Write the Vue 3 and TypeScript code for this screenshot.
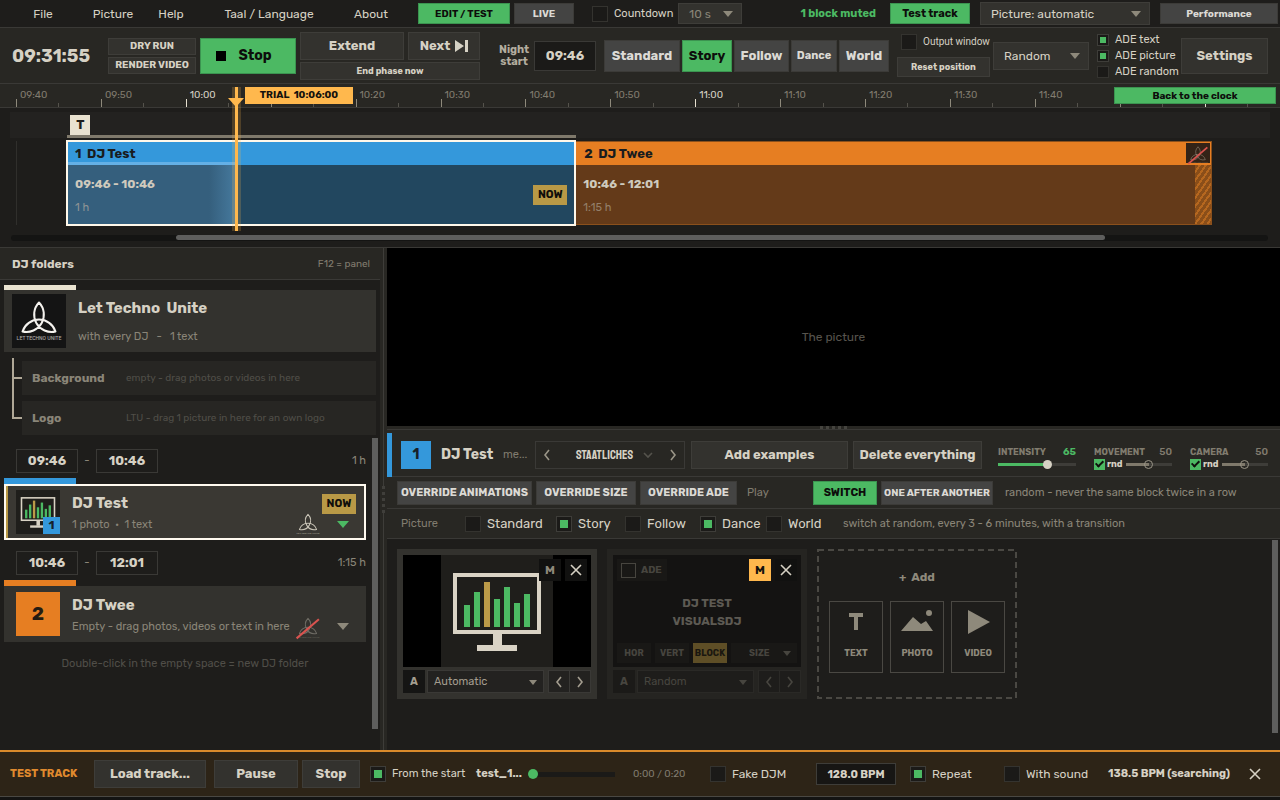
<script setup lang="ts">
import { defineComponent, h, ref } from 'vue'

const SPAN = 1280
const PX_PER_MIN = 8.49
const START_MIN = 580

const x = (min: number) => ((16 + (min - START_MIN) * PX_PER_MIN) / SPAN) * 100
const at = (min: number) => ({ left: `${x(min)}%` })
const range = (a: number, b: number) => ({ left: `${x(a)}%`, width: `${x(b) - x(a)}%` })

interface Tick { min: number; label: string; major: boolean; hour: boolean }
const ticks: Tick[] = []
for (let m = START_MIN; m <= 725; m += 5) {
  const major = m % 10 === 0
  const show = major && m <= 700 && m !== 610
  const hh = String(Math.floor(m / 60)).padStart(2, '0')
  ticks.push({ min: m, major, hour: m % 60 === 0, label: show ? `${hh}:${String(m % 60).padStart(2, '0')}` : '' })
}

const menus = [
  { t: 'File', c: 'm-file' },
  { t: 'Picture', c: 'm-picture' },
  { t: 'Help', c: 'm-help' },
  { t: 'Taal / Language', c: 'm-lang' },
  { t: 'About', c: 'm-about' },
]
const modes = ['Standard', 'Story', 'Follow', 'Dance', 'World']
const ade = ref([
  { t: 'ADE text', on: true },
  { t: 'ADE picture', on: true },
  { t: 'ADE random', on: false },
])
const pictures = ref([
  { t: 'Standard', on: false },
  { t: 'Story', on: true },
  { t: 'Follow', on: false },
  { t: 'Dance', on: true },
  { t: 'World', on: false },
])
const levels = ref([
  { t: 'Intensity', v: 65, rnd: false },
  { t: 'Movement', v: 50, rnd: true },
  { t: 'Camera', v: 50, rnd: true },
])
const nightStart = ref('09:46')
const bpm = ref('128.0 BPM')
const slots = ref({ a1: '09:46', a2: '10:46', b1: '10:46', b2: '12:01' })

const Knot = defineComponent({
  props: { off: Boolean },
  setup: (p) => () =>
    h('svg', { viewBox: '0 0 54 54', 'aria-hidden': 'true' }, [
      h('path', {
        d: 'M27 8.5A17.4 17.4 0 0 0 43.5 37.5A17.4 17.4 0 0 0 10.5 37.5A17.4 17.4 0 0 0 27 8.5Z',
        fill: 'none', stroke: 'currentColor', 'stroke-width': 2, 'stroke-linejoin': 'round', opacity: p.off ? 0.4 : 1,
      }),
      h('text', {
        x: 27, y: 46, 'text-anchor': 'middle', 'font-size': 5, fill: 'currentColor', opacity: p.off ? 0.3 : 0.7,
      }, 'LET TECHNO UNITE'),
      p.off ? h('path', { d: 'M5 47L48 10', stroke: '#d9534f', 'stroke-width': 4 }) : null,
    ]),
})

const bars: [number, number][] = [[23, 50], [33, 37], [43, 27], [53, 44], [63, 32], [73, 48], [83, 39]]
const Monitor = defineComponent({
  setup: () => () =>
    h('svg', { viewBox: '0 0 112 112', 'aria-hidden': 'true' }, [
      h('rect', { width: 112, height: 112, fill: '#1f1e1b' }),
      h('rect', { x: 14, y: 20, width: 84, height: 57, fill: 'none', stroke: '#d9d3c5', 'stroke-width': 4 }),
      ...bars.map(([bx, by]) =>
        h('rect', { x: bx, y: by, width: 6, height: 72 - by, fill: bx === 43 ? '#bb9a48' : '#4cb963' })),
      h('rect', { x: 52, y: 78, width: 9, height: 13, fill: '#d9d3c5' }),
      h('rect', { x: 36, y: 90, width: 40, height: 6, fill: '#d9d3c5' }),
    ]),
})

const Chevron = defineComponent({
  props: { dir: { type: String, default: 'l' } },
  setup: (p) => () =>
    h('svg', { viewBox: '0 0 12 12', width: 12, height: 12, 'aria-hidden': 'true' }, [
      h('path', {
        d: p.dir === 'l' ? 'M8 1L4 6L8 11' : p.dir === 'r' ? 'M4 1L8 6L4 11' : p.dir === 'd' ? 'M2 4L6 8L10 4' : 'M1 1L11 11M11 1L1 11',
        fill: 'none', stroke: 'currentColor', 'stroke-width': 1.6,
      }),
    ]),
})
</script>

<template>
  <div class="app">
    <nav class="menubar">
      <button v-for="m in menus" :key="m.t" class="menu" :class="m.c">{{ m.t }}</button>
      <button class="btn green small edit">EDIT / TEST</button>
      <button class="btn gray small live">LIVE</button>
      <label class="chk"><input type="checkbox"><span class="t11">Countdown</span></label>
      <div class="sel s-count"><select aria-label="Countdown length" class="dim"><option>10 s</option></select></div>
      <span class="muted-note">1 block muted</span>
      <button class="btn green test">Test track</button>
      <div class="sel s-picture"><select aria-label="Picture mode"><option>Picture: automatic</option></select></div>
      <button class="btn gray small perf">Performance</button>
    </nav>

    <header class="toolbar">
      <time class="clock">09:31:55</time>
      <div class="stack render">
        <button class="btn small">DRY RUN</button>
        <button class="btn small">RENDER VIDEO</button>
      </div>
      <button class="btn green stop"><i class="square"></i>Stop</button>
      <div class="phase">
        <button class="btn big">Extend</button>
        <button class="btn big">Next
          <svg width="13" height="12" viewBox="0 0 13 12" aria-hidden="true"><path d="M0 0L9 6L0 12ZM10 0H13V12H10Z" fill="currentColor" /></svg>
        </button>
        <button class="btn tiny wide">End phase now</button>
      </div>
      <label class="night"><span>Night<br>start</span><input v-model="nightStart" type="text"></label>
      <div class="modes">
        <button v-for="m in modes" :key="m" class="btn" :class="[m === 'Story' ? 'green' : 'gray', 'mode-' + m.toLowerCase()]">{{ m }}</button>
      </div>
      <div class="output">
        <label class="chk"><input type="checkbox"><span>Output window</span></label>
        <button class="btn tiny">Reset position</button>
      </div>
      <div class="sel s-random"><select aria-label="Order"><option>Random</option></select></div>
      <div class="ade">
        <label v-for="a in ade" :key="a.t" class="chk sm"><input v-model="a.on" type="checkbox"><span>{{ a.t }}</span></label>
      </div>
      <button class="btn settings">Settings</button>
    </header>

    <section class="timeline">
      <div class="ruler">
        <div v-for="t in ticks" :key="t.min" class="tick" :class="{ major: t.major, hour: t.hour }" :style="at(t.min)"><span>{{ t.label }}</span></div>
        <span class="trial">TRIAL&nbsp; 10:06:00</span>
        <button class="btn green back">Back to the clock</button>
      </div>
      <div class="tracks">
        <div class="lane">
          <span class="tchip" :style="at(586.4)">T</span>
          <span class="tbar" :style="range(586, 646)"></span>
        </div>
        <div class="blocks">
          <i class="gridline" :style="at(580)"></i>
          <article class="block one" :style="range(585.9, 646)">
            <h3>1 &nbsp;DJ Test</h3>
            <div class="done"></div>
            <p class="when">09:46 - 10:46</p>
            <p class="len">1 h</p>
            <span class="now">NOW</span>
          </article>
          <article class="block two" :style="range(646, 720.9)">
            <h3>2 &nbsp;DJ Twee</h3>
            <p class="when">10:46 - 12:01</p>
            <p class="len">1:15 h</p>
            <i class="stripes"></i>
            <span class="knotbox"><Knot off /></span>
          </article>
        </div>
        <div class="hscroll"><i></i></div>
      </div>
      <div class="playhead" :style="at(606)"><i></i></div>
    </section>

    <main class="body">
      <aside class="folders">
        <header class="fhead"><h2>DJ folders</h2><span>F12 = panel</span></header>
        <div class="pinned">
          <article class="folder root">
            <div class="logo"><Knot /></div>
            <div class="ftext"><h3>Let Techno&nbsp; Unite</h3><p>with every DJ &nbsp;&nbsp;-&nbsp;&nbsp; 1 text</p></div>
          </article>
          <div class="tree">
            <div class="slot"><b>Background</b><span>empty - drag photos or videos in here</span></div>
            <div class="slot"><b>Logo</b><span>LTU - drag 1 picture in here for an own logo</span></div>
          </div>
        </div>
        <div class="list">
          <div class="items">
            <div class="times">
              <input v-model="slots.a1" type="text" aria-label="DJ Test from"><span>-</span><input v-model="slots.a2" type="text" aria-label="DJ Test until"><em>1 h</em>
            </div>
            <article class="folder dj sel-dj">
              <div class="thumb"><Monitor /><b>1</b></div>
              <div class="ftext"><h3>DJ Test</h3><p>1 photo &nbsp;•&nbsp; 1 text</p></div>
              <span class="now">NOW</span>
              <span class="mini"><Knot /></span>
              <i class="arrow"></i>
            </article>
            <div class="times">
              <input v-model="slots.b1" type="text" aria-label="DJ Twee from"><span>-</span><input v-model="slots.b2" type="text" aria-label="DJ Twee until"><em>1:15 h</em>
            </div>
            <article class="folder dj orange">
              <div class="thumb num">2</div>
              <div class="ftext"><h3>DJ Twee</h3><p>Empty - drag photos, videos or text in here</p></div>
              <span class="mini"><Knot off /></span>
              <i class="arrow"></i>
            </article>
            <p class="hint">Double-click in the empty space = new DJ folder</p>
          </div>
          <i class="vscroll"></i>
        </div>
      </aside>
      <div class="divider"><i></i></div>

      <section class="stage">
        <div class="preview">The picture</div>
        <div class="grip"><i></i></div>
        <div class="row djrow">
          <b class="numbox">1</b>
          <h2>DJ Test</h2><span class="me">me...</span>
          <div class="fontpick">
            <button aria-label="Previous font"><Chevron dir="l" /></button>
            <button class="fname">STAATLICHES</button>
            <Chevron dir="d" class="fd" />
            <button aria-label="Next font"><Chevron dir="r" /></button>
          </div>
          <button class="btn b13 addx">Add examples</button>
          <button class="btn b13 delx">Delete everything</button>
          <div class="levels">
            <div v-for="l in levels" :key="l.t" class="level" :class="{ idle: l.rnd }">
              <label :for="'lv-' + l.t">{{ l.t.toUpperCase() }}</label><output>{{ l.v }}</output>
              <div class="lrow">
                <label v-if="l.rnd" class="rnd"><input type="checkbox" checked><span>rnd</span></label>
                <input :id="'lv-' + l.t" v-model="l.v" type="range" class="rng" :style="{ '--v': l.v + '%' }">
              </div>
            </div>
          </div>
        </div>
        <div class="row overrow">
          <button class="btn gray o1">OVERRIDE ANIMATIONS</button>
          <button class="btn gray o2">OVERRIDE SIZE</button>
          <button class="btn gray o3">OVERRIDE ADE</button>
          <span class="play">Play</span>
          <button class="btn green o4">SWITCH</button>
          <button class="btn gray o5">ONE AFTER ANOTHER</button>
          <span class="note">random - never the same block twice in a row</span>
        </div>
        <div class="row picrow">
          <span class="plabel">Picture</span>
          <label v-for="p in pictures" :key="p.t" class="chk" :class="'p-' + p.t.toLowerCase()"><input v-model="p.on" type="checkbox"><span class="t13">{{ p.t }}</span></label>
          <span class="note">switch at random, every 3 - 6 minutes, with a transition</span>
        </div>
        <div class="cards">
          <article class="card">
            <div class="pic">
              <Monitor />
              <div class="corner"><button class="sq m">M</button><button class="sq" aria-label="Remove"><Chevron dir="x" /></button></div>
            </div>
            <div class="cfoot">
              <button class="a">A</button>
              <div class="sel"><select aria-label="Animation of block 1"><option>Automatic</option></select></div>
              <div class="pair"><button aria-label="Previous"><Chevron dir="l" /></button><button aria-label="Next"><Chevron dir="r" /></button></div>
            </div>
          </article>
          <article class="card muted">
            <div class="txt">
              <div class="ttop">
                <label class="adechip"><input type="checkbox"><span>ADE</span></label>
                <button class="sq on">M</button><button class="sq" aria-label="Remove"><Chevron dir="x" /></button>
              </div>
              <p>DJ TEST<br>VISUALSDJ</p>
              <div class="dirs"><button>HOR</button><button>VERT</button><button class="act">BLOCK</button>
                <div class="sel"><select aria-label="Size"><option>SIZE</option></select></div></div>
            </div>
            <div class="cfoot">
              <button class="a">A</button>
              <div class="sel"><select aria-label="Animation of block 2"><option>Random</option></select></div>
              <div class="pair"><button aria-label="Previous"><Chevron dir="l" /></button><button aria-label="Next"><Chevron dir="r" /></button></div>
            </div>
          </article>
          <article class="adder">
            <svg class="dash" aria-hidden="true"><rect x="1" y="1" width="198" height="148" /></svg>
            <h3>+&nbsp; Add</h3>
            <div class="kinds">
              <button><svg viewBox="0 0 32 26"><path d="M9 3H23V7H18V20H14V7H9Z" /></svg>TEXT</button>
              <button><svg viewBox="0 0 32 26"><path d="M0 21L12 7L20 14L25 11L32 21Z" /><circle cx="28" cy="3" r="3" /></svg>PHOTO</button>
              <button><svg viewBox="0 0 32 26"><path d="M6 0L28 12L6 24Z" /></svg>VIDEO</button>
            </div>
          </article>
          <i class="vscroll"></i>
        </div>
      </section>
    </main>

    <footer class="player">
      <strong>TEST TRACK</strong>
      <button class="btn b13 load">Load track...</button>
      <button class="btn b13 pause">Pause</button>
      <button class="btn b13 fstop">Stop</button>
      <label class="chk f1"><input type="checkbox" checked><span class="t11">From the start</span></label>
      <b class="file">test_1...</b>
      <input type="range" value="0" class="seek" aria-label="Position">
      <span class="pos">0:00 / 0:20</span>
      <label class="chk f2"><input type="checkbox"><span>Fake DJM</span></label>
      <input v-model="bpm" type="text" class="bpm" aria-label="Tempo">
      <label class="chk f3"><input type="checkbox" checked><span>Repeat</span></label>
      <label class="chk f4"><input type="checkbox"><span>With sound</span></label>
      <b class="search">138.5 BPM (searching)</b>
      <button class="close" aria-label="Close"><Chevron dir="x" /></button>
    </footer>
    <div class="edge"></div>
  </div>
</template>

<style>
body { background: #1e1d1b; }
</style>

<style scoped>
.app, .app :deep(*) { box-sizing: border-box; }
.app {
  min-height: 100vh; display: flex; flex-direction: column; overflow: hidden;
  background: #1e1d1b; color: #d6d1c4;
  font: 12px/16px Rubik, Roboto, "Noto Sans", sans-serif; white-space: nowrap;
}
h2, h3, p { margin: 0; font-size: inherit; }
button, input, select { font: inherit; color: inherit; margin: 0; padding: 0; border: 0; border-radius: 0; background: none; outline: 0; }
i, em { font-style: normal; }
b, strong { font-weight: 700; }
svg { display: block; flex: none; }
.t13 { font-size: 13px; }
.t11 { font-size: 11px; }

.btn { background: #33322e; border: 1px solid #3e3d39; font-weight: 700; font-size: 13px; display: flex; align-items: center; justify-content: center; flex: none; }
.btn.green { background: #4cb963; border-color: #3b9450; color: #0d0d0b; }
.btn.gray { background: #444443; border-color: #3c3b38; color: #dcdad5; }
.btn.small { font-size: 10px; }
.btn.tiny { font-size: 9px; line-height: 12px; }
.b13 { height: 28px; }

.chk { display: flex; align-items: center; gap: 6px; flex: none; }
.chk input { appearance: none; width: 16px; height: 16px; background: #1b1a18; border: 1px solid #34332f; flex: none; }
.chk input:checked { background: #4cb963; box-shadow: inset 0 0 0 3px #1b1a18; border-color: #3e3d39; }
.chk.sm input { width: 12px; height: 12px; }
.chk.sm input:checked { box-shadow: inset 0 0 0 2px #1b1a18; }

.sel { position: relative; background: #33322e; border: 1px solid #3e3d39; display: flex; flex: none; }
.sel select { appearance: none; width: 100%; padding-left: 10px; }
.sel::after { content: ""; position: absolute; right: 8px; top: 50%; margin-top: -3px; border: 5px solid transparent; border-top: 6px solid #8e897b; border-bottom: 0; pointer-events: none; }
.dim { color: #8a8578; }

.menubar { height: 28px; display: flex; align-items: center; background: #1e1d1b; border-bottom: 1px solid #3a3936; padding-right: 2px; }
.menu { flex: none; height: 24px; text-align: center; }
.m-file { width: 86px; }
.m-picture { width: 54px; }
.m-help { width: 62px; }
.m-lang { width: 134px; }
.m-about { width: 70px; margin-right: 12px; }
.menubar .btn { height: 21px; }
.edit { width: 92px; margin-right: 4px; }
.live { width: 60px; margin-right: 18px; }
.s-count { width: 64px; height: 21px; margin-left: 2px; }
.menubar .chk { width: 84px; }
.muted-note { margin-left: auto; color: #4cb963; font-weight: 700; font-size: 11px; }
.test { width: 80px; margin: 0 10px 0 14px; font-size: 11px; }
.s-picture { width: 170px; height: 23px; margin-right: 10px; }
.perf { width: 118px; }

.toolbar { height: 56px; display: flex; align-items: center; background: #282723; border-bottom: 1px solid #3a3936; padding: 0 12px; }
.clock { width: 96px; font-size: 18px; font-weight: 700; flex: none; }
.stack { display: grid; gap: 2px; width: 88px; margin-right: 4px; flex: none; }
.stack .btn { height: 17px; }
.stop { width: 96px; height: 36px; gap: 12px; margin-right: 4px; padding-right: 8px; font-size: 14px; }
.square { width: 10px; height: 10px; background: #000; }
.phase { display: grid; grid-template-columns: 104px 72px; gap: 2px 4px; margin-right: 19px; flex: none; }
.phase .big { height: 28px; gap: 5px; }
.phase .wide { grid-column: span 2; height: 18px; }
.night { display: flex; align-items: center; gap: 6px; margin-right: 8px; flex: none; color: #b3ad9f; font-size: 11px; line-height: 12px; font-weight: 700; text-align: right; }
.night span { width: 29px; }
.night input { width: 62px; height: 30px; background: #1b1a18; border: 1px solid #3a3936; text-align: center; font-size: 13px; color: #d6d1c4; }
.modes { display: flex; gap: 2px; margin-right: 8px; flex: none; }
.modes .btn { height: 32px; }
.mode-standard { width: 76px; }
.mode-story { width: 50px; }
.mode-follow { width: 55px; }
.mode-dance { width: 46px; }
.mode-world { width: 50px; }
.modes .mode-dance { font-size: 11px; }
.output { width: 92px; margin-right: 4px; display: grid; gap: 7px; flex: none; }
.output .chk { padding-left: 4px; font-family: Roboto, sans-serif; font-size: 10px; }
.output .btn { height: 20px; }
.s-random { width: 96px; height: 28px; margin-right: 8px; }
.ade { display: grid; flex: none; width: 84px; }
.chk.sm { font-size: 11px; }
.settings { width: 87px; height: 36px; margin-left: auto; }

.timeline { position: relative; border-bottom: 1px solid #3a3936; }
.ruler { position: relative; height: 24px; background: #282723; border-bottom: 1px solid #3a3936; }
.tick { position: absolute; bottom: 0; height: 4px; width: 1px; background: #55534c; color: #817c6f; font-size: 10px; }
.tick.major { height: 8px; background: #8e897b; }
.tick.hour { background: #e6dfcf; color: #d6d1c4; }
.tick span { position: absolute; left: 4px; bottom: 4px; }
.trial { position: absolute; left: 19.14%; top: 3px; width: 108px; height: 17px; background: #ffb84d; color: #14120d; font-weight: 700; font-size: 10px; line-height: 17px; text-align: center; }
.back { position: absolute; right: 4px; top: 3px; width: 162px; height: 17px; font-size: 10px; }
.tracks { padding-top: 4px; }
.lane { position: relative; height: 26px; }
.lane::before { content: ""; display: block; margin: 0 10px; height: 26px; background: #232220; }
.tchip { position: absolute; top: 3px; width: 20px; height: 20px; background: #e9e2d0; color: #1e1d1b; font-weight: 700; font-size: 13px; line-height: 20px; text-align: center; }
.tbar { position: absolute; bottom: 0; height: 3px; background: #7f796b; }
.blocks { position: relative; height: 86px; margin-top: 2px; }
.gridline { position: absolute; top: 1px; bottom: 1px; width: 1px; background: #302f2c; }
.block { position: absolute; overflow: hidden; }
.block h3 { height: 23px; line-height: 23px; padding-left: 8px; font-size: 13px; word-spacing: normal; color: #191c1e; }
.block.one { top: 0; height: 86px; border: 2px solid #fff8ea; background: #22475f; }
.block.one h3 { background: #3498db; padding-left: 7px; }
.done { position: absolute; left: 0; top: 20px; bottom: 0; width: 168px; border-top: 3px solid #64b0e6; background: linear-gradient(90deg, #355f7d 84%, #467a9e); }
.block p { position: relative; padding-left: 7px; }
.when { font-weight: 700; font-size: 12px; margin-top: 11px; color: #cfcabd; }
.block .len { font-size: 11px; margin-top: 8px; color: #8e9495; }
.now { background: #b99946; color: #100f0b; font-weight: 700; font-size: 11px; width: 34px; height: 20px; line-height: 20px; text-align: center; }
.block .now { position: absolute; right: 7px; top: 43px; }
.block.two { top: 1px; height: 84px; border: 1px solid #8b501c; border-left: 0; background: #643a19; }
.block.two h3 { background: #e67e22; }
.block.two .len { color: #94806a; }
.stripes { position: absolute; right: 0; top: 23px; bottom: 0; width: 16px; background: repeating-linear-gradient(125deg, #8a4e19 0 3px, #b5671f 3px 5px); }
.knotbox { position: absolute; right: 1px; top: 1px; width: 24px; height: 20px; background: #332317; color: #d0c6b4; display: grid; place-items: center; }
.knotbox svg { width: 24px; height: 24px; }
.hscroll { margin: 9px 12px 6px 11px; height: 6px; border-radius: 3px; background: #141413; }
.hscroll i { display: block; margin: 0 13% 0 13.1%; height: 5px; border-radius: 3px; background: #5e5e5d; }
.playhead { position: absolute; top: 3px; height: 144px; width: 3px; margin-left: -2px; background: #ffb84d; box-shadow: 3px 0 rgba(255, 184, 77, .2), -3px 0 rgba(255, 184, 77, .2); }
.playhead i { position: absolute; left: -7px; top: 11px; border: 8px solid transparent; border-top: 9px solid #ffb84d; border-bottom: 0; }

.body { flex: 1; display: flex; }
.folders { width: 380px; flex: none; display: flex; flex-direction: column; }
.fhead { height: 32px; display: flex; align-items: center; justify-content: space-between; padding: 0 10px 0 12px; background: #282723; border-bottom: 1px solid #3a3936; color: #817c6f; font-size: 10px; }
.fhead h2 { font-size: 12px; color: #d6d1c4; }
.pinned { padding: 10px 4px 0; }
.folder { position: relative; display: flex; background: #33322e; color: #8a8578; }
.folder::before { content: ""; position: absolute; left: 0; top: -5px; width: 72px; height: 5px; background: #e9e2d0; }
.folder h3 { font-size: 15px; line-height: 20px; color: #d6d1c4; }
.root { height: 62px; padding: 4px 8px; gap: 12px; }
.root .ftext { padding-top: 4px; }
.root p { margin-top: 11px; font-size: 11px; }
.logo { width: 54px; height: 54px; background: #141414; color: #f4f2ee; }
.logo svg { width: 54px; height: 54px; }
.tree { margin: 6px 0 0 8px; padding: 3px 0 0 10px; display: grid; gap: 6px; position: relative; }
.tree::before { content: ""; position: absolute; left: 0; top: 0; height: 59px; width: 8px; border-left: 2px solid #b0a897; border-bottom: 2px solid #b0a897; }
.tree::after { content: ""; position: absolute; left: 0; top: 19px; width: 10px; height: 2px; background: #b0a897; }
.slot { height: 34px; display: grid; grid-template-columns: 94px 1fr; align-items: center; padding-left: 10px; background: #272623; color: #504e48; font-size: 10px; }
.slot b { color: #8a8578; font-size: 12px; }
.list { flex: 1; display: flex; padding: 3px 2px 21px 4px; }
.items { flex: 1; }
.times { height: 46px; padding: 11px 0 0 12px; display: flex; align-items: flex-start; line-height: 24px; font-size: 11px; color: #8a8578; }
.times input { width: 62px; height: 24px; border: 1px solid #3a3936; text-align: center; font-weight: 700; font-size: 13px; color: #d6d1c4; }
.times span { width: 18px; text-align: center; }
.times em { margin-left: auto; }
.dj { height: 56px; padding: 6px 12px; gap: 12px; }
.dj::before { top: -6px; height: 6px; }
.dj .ftext { padding-top: 3px; }
.dj p { margin-top: 4px; font-size: 11px; }
.orange::before { background: #e67e22; }
.sel-dj { border: 2px solid #fffaf0; padding: 4px 10px; background: #3a3833; }
.sel-dj::before { background: #3498db; left: -2px; top: -8px; }
.sel-dj::after { content: ""; position: absolute; left: 0; top: 0; bottom: 0; width: 2px; background: #b99946; }
.thumb { position: relative; width: 44px; height: 44px; flex: none; }
.thumb svg { width: 44px; height: 44px; }
.thumb b { position: absolute; right: 0; bottom: 0; width: 17px; height: 17px; background: #3498db; color: #17212a; font-size: 12px; line-height: 17px; text-align: center; }
.thumb.num { background: #e67e22; color: #241b12; font-size: 19px; font-weight: 700; line-height: 44px; text-align: center; }
.folder .now { position: absolute; right: 8px; top: 8px; }
.mini { position: absolute; right: 44px; bottom: 0; width: 28px; height: 28px; color: #c9c4b7; }
.sel-dj .mini { right: 42px; }
.mini svg { width: 28px; height: 28px; }
.arrow { position: absolute; right: 17px; bottom: 12px; border: 6px solid transparent; border-top: 7px solid #8e897b; border-bottom: 0; }
.sel-dj .arrow { right: 15px; bottom: 10px; border-top-color: #4cb963; }
.hint { margin-top: 14px; text-align: center; color: #504e48; font-size: 11px; }
.vscroll { width: 6px; background: #5e5e5d; margin-left: 6px; }

.divider { width: 7px; flex: none; background: #282723; display: grid; place-items: center; }
.divider::before { content: ""; grid-area: 1 / 1; width: 1px; height: 100%; background: #3e3d39; }
.divider i { grid-area: 1 / 1; width: 3px; height: 27px; background: repeating-linear-gradient(#403f3b 0 3px, #282723 3px 6px); }
.stage { flex: 1; min-width: 0; display: flex; flex-direction: column; }
.preview { flex: 1 1 178px; background: #000; color: #57544d; display: grid; place-items: center; }
.grip { height: 4px; background: #282723; border-bottom: 1px solid #3a3936; display: grid; justify-items: center; align-items: end; }
.grip i { width: 27px; height: 3px; background: repeating-linear-gradient(90deg, #45443f 0 3px, #282723 3px 6px); }
.row { display: flex; align-items: center; background: #282723; border-bottom: 1px solid #3a3936; flex: none; }
.djrow { position: relative; height: 47px; padding: 4px 12px 0 14px; }
.djrow::before { content: ""; position: absolute; left: 0; top: 3px; bottom: -1px; width: 5px; background: #3498db; }
.numbox { width: 30px; height: 28px; background: #3498db; color: #17212a; font-size: 14px; line-height: 28px; text-align: center; margin-right: 10px; flex: none; }
.djrow h2 { font-size: 14px; width: 62px; flex: none; }
.me { color: #817c6f; width: 32px; flex: none; font-size: 11px; }
.fontpick { width: 150px; height: 28px; border: 1px solid #3a3936; display: flex; align-items: center; margin-right: 6px; padding: 0 5px; color: #9a9587; flex: none; }
.fontpick button { height: 26px; }
.fontpick .fname { flex: 1; font-family: Staatliches, "Bebas Neue", "Roboto Condensed", Rubik, Roboto, sans-serif; font-size: 13px; color: #d6d1c4; padding-left: 18px; }
.fd { margin: 0 13px 0 4px; color: #55534c; }
.addx { width: 157px; margin-right: 5px; }
.delx { width: 129px; }
.levels { display: flex; gap: 18px; margin-left: auto; flex: none; padding-top: 6px; }
.level { width: 78px; display: grid; grid-template-columns: 1fr auto; font-size: 9px; line-height: 12px; font-weight: 700; color: #817c6f; }
.level output { color: #4cb963; font-size: 10px; }
.idle output { color: #817c6f; font-weight: 500; }
.lrow { grid-column: span 2; display: flex; align-items: center; gap: 3px; height: 12px; }
.rnd { display: flex; align-items: center; gap: 2px; color: #d6d1c4; }
.rnd input { appearance: none; width: 11px; height: 11px; background: #4cb963; display: grid; place-items: center; }
.rnd input::before { content: ""; width: 3px; height: 6px; margin-top: -2px; border: solid #10110e; border-width: 0 2px 2px 0; transform: rotate(45deg); }
.rng { appearance: none; flex: 1; min-width: 0; height: 10px; background: linear-gradient(90deg, #4cb963 var(--v), #3e3d39 var(--v)) center / 100% 3px no-repeat; }
.rng::-webkit-slider-thumb { appearance: none; width: 9px; height: 9px; border-radius: 50%; background: #d6d1c4; }
.idle .rng { background-image: linear-gradient(90deg, #7f796b var(--v), #3e3d39 var(--v)); }
.idle .rng::-webkit-slider-thumb { background: transparent; border: 1px solid #9a9587; }
.overrow { height: 32px; padding: 0 10px; }
.overrow .btn { height: 24px; font-size: 11px; }
.o1 { width: 135px; margin-right: 4px; }
.o2 { width: 100px; margin-right: 4px; }
.o3 { width: 97px; margin-right: 10px; }
.play { width: 66px; color: #817c6f; font-size: 11px; }
.overrow .o4 { width: 64px; margin-right: 4px; }
.overrow .o5 { width: 112px; margin-right: 12px; font-size: 10px; }
.note { color: #8a8578; font-size: 11px; }
.picrow { height: 30px; padding: 0 14px; }
.plabel { width: 64px; color: #817c6f; font-size: 11px; }
.p-standard { width: 91px; }
.p-story { width: 69px; }
.p-follow { width: 75px; }
.p-dance { width: 66px; }
.p-world { width: 77px; }
.cards { flex: 1 1 211px; display: flex; align-items: flex-start; gap: 10px; padding: 10px 2px 17px 10px; }
.cards .vscroll { margin: -9px 0 0 auto; align-self: stretch; flex: none; }
.card { width: 200px; padding: 6px; background: #33322e; color: #a39d8f; flex: none; }
.pic { position: relative; height: 112px; background: #000; display: flex; justify-content: center; }
.pic > svg { height: 112px; width: 112px; }
.corner { position: absolute; right: 4px; top: 4px; display: flex; gap: 4px; }
.sq { width: 22px; height: 22px; background: #111110; color: #d6d1c4; display: grid; place-items: center; font-weight: 700; }
.sq.m { color: #8e897b; }
.sq.on { background: #ffb84d; color: #14120d; }
.cfoot { display: flex; gap: 2px; margin-top: 3px; height: 23px; font-size: 11px; }
.a { width: 22px; background: #151514; font-weight: 700; }
.cfoot .sel { flex: 1; background: #232220; border-color: #3a3936; }
.cfoot .sel select { padding-left: 6px; }
.pair { display: flex; margin-left: 2px; border: 1px solid #3a3936; background: #232220; }
.pair button { width: 20px; display: grid; place-items: center; }
.pair button + button { width: 21px; border-left: 1px solid #3a3936; }
.muted { background: #252421; color: #47453f; }
.muted .cfoot .sel, .muted .pair, .muted .pair button { background: #1e1d1b; border-color: #2a2926; }
.muted .a { background: #1b1a18; }
.muted .sel::after { border-top-color: #47453f; }
.txt { height: 112px; background: #141312; padding: 4px; display: flex; flex-direction: column; justify-content: space-between; }
.ttop { display: flex; gap: 4px; }
.adechip { margin-right: auto; width: 50px; height: 22px; display: flex; align-items: center; gap: 5px; padding-left: 4px; background: #191816; font-weight: 700; font-size: 10px; }
.adechip input { appearance: none; width: 15px; height: 15px; border: 1px solid #47453f; }
.txt p { text-align: center; font-weight: 700; font-size: 12px; line-height: 18px; color: #5d5a53; }
.dirs { display: flex; gap: 4px; font-weight: 700; font-size: 9px; }
.dirs button { width: 34px; height: 20px; background: #191816; }
.dirs .act { background: #5e4e26; color: #1a1710; }
.dirs .sel { flex: 1; background: #191816; border: 0; }
.dirs .sel select { padding-left: 18px; }
.dirs .sel::after, .cfoot .sel::after { right: 6px; margin-top: -2px; border-width: 5px 4px 0; }
.adder { position: relative; width: 200px; height: 150px; padding: 20px 12px 0; color: #8e897b; flex: none; }
.dash { position: absolute; inset: 0; width: 200px; height: 150px; }
.dash rect { fill: none; stroke: #4a4843; stroke-width: 2; stroke-dasharray: 6 4; }
.adder h3 { text-align: center; font-size: 12px; }
.kinds { display: flex; gap: 7px; margin-top: 16px; }
.kinds button { width: 54px; height: 72px; border: 1px solid #4a4843; font-weight: 700; font-size: 9px; display: flex; flex-direction: column; align-items: center; gap: 9px; padding-top: 8px; }
.kinds svg { width: 32px; height: 26px; fill: #8e897b; overflow: visible; }

.player { height: 46px; border-top: 2px solid #d98a2b; background: #2d2417; display: flex; align-items: center; padding: 0 19px 0 10px; }
.player strong { width: 84px; font-size: 11px; color: #e08a2e; flex: none; }
.load { width: 112px; margin-right: 8px; }
.pause { width: 84px; margin-right: 4px; }
.fstop { width: 58px; margin-right: 10px; }
.f1 { width: 106px; }
.file { width: 52px; font-size: 11px; flex: none; }
.seek { appearance: none; flex: 1; min-width: 60px; height: 10px; background: linear-gradient(#1b1a18, #1b1a18) center / 100% 5px no-repeat; }
.seek::-webkit-slider-thumb { appearance: none; width: 10px; height: 10px; border-radius: 50%; background: #4cb963; }
.pos { margin-left: 18px; width: 77px; color: #817c6f; font-size: 10px; flex: none; }
.f2 { width: 106px; }
.bpm { width: 80px; height: 22px; background: #171614; border: 1px solid #3e3d39; text-align: center; font-weight: 700; font-size: 11px; margin-right: 14px; flex: none; }
.f3 { width: 94px; }
.f4 { width: 104px; }
.search { width: 141px; font-size: 11px; flex: none; }
.close { width: 12px; height: 16px; display: grid; place-items: center; }
.edge { height: 4px; border-top: 1px solid #4a4843; background: #141413; }
</style>
